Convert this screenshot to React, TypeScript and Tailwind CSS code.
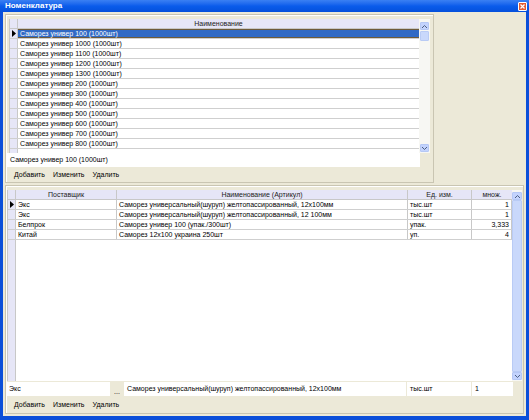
import React from "react";

const upperRows = [
  "Саморез универ 100 (1000шт)",
  "Саморез универ 1000 (1000шт)",
  "Саморез универ 1100 (1000шт)",
  "Саморез универ 1200 (1000шт)",
  "Саморез универ 1300 (1000шт)",
  "Саморез универ 200 (1000шт)",
  "Саморез универ 300 (1000шт)",
  "Саморез универ 400 (1000шт)",
  "Саморез универ 500 (1000шт)",
  "Саморез универ 600 (1000шт)",
  "Саморез универ 700 (1000шт)",
  "Саморез универ 800 (1000шт)",
];

const lowerRows = [
  { supplier: "Экс", name: "Саморез универсальный(шуруп) желтопассированный, 12x100мм", unit: "тыс.шт", mult: "1" },
  { supplier: "Экс", name: "Саморез универсальный(шуруп) желтопассированный, 12 100мм", unit: "тыс.шт", mult: "1" },
  { supplier: "Белпрок", name: "Саморез универ 100 (упак./300шт)", unit: "упак.", mult: "3,333" },
  { supplier: "Китай", name: "Саморез 12x100 украина 250шт", unit: "уп.", mult: "4" },
];

function Marker() {
  return (
    <svg width="4" height="7" viewBox="0 0 4 7">
      <path d="M0 0 L4 3.5 L0 7 Z" fill="#000" />
    </svg>
  );
}

function ArrowBtn({ dir }: { dir: "up" | "down" }) {
  return (
    <div className="h-[8px] w-full rounded-[1px] bg-[#c3d3fd] border border-[#b5c8f5] flex items-center justify-center">
      <svg width="5" height="3" viewBox="0 0 5 3">
        <path d={dir === "up" ? "M0 3 L2.5 0.5 L5 3" : "M0 0 L2.5 2.5 L5 0"} stroke="#4d6185" strokeWidth="1" fill="none" />
      </svg>
    </div>
  );
}

function FlatButton({ label }: { label: string }) {
  return <button className="text-[7px] text-black leading-none">{label}</button>;
}

export default function App() {
  return (
    <div className="w-[529px] h-[420px] flex flex-col bg-[#0b4fd9] font-['Liberation_Sans',Arial,sans-serif] overflow-hidden">
      {/* Title bar */}
      <div className="h-[12px] flex items-center justify-between pl-[5px] pr-[2px] bg-gradient-to-b from-[#3a80f3] via-[#0a5ceb] to-[#0550dc]">
        <span className="text-white text-[8px] font-bold leading-none">Номенклатура</span>
        <div className="w-[9px] h-[9px] bg-[#e35a31] border border-white rounded-[1px] flex items-center justify-center">
          <svg width="5" height="5" viewBox="0 0 5 5">
            <path d="M0.5 0.5 L4.5 4.5 M4.5 0.5 L0.5 4.5" stroke="#fff" strokeWidth="1.2" />
          </svg>
        </div>
      </div>

      {/* Body */}
      <div className="flex-1 mx-[3px] mb-[4px] bg-[#ece9d8] flex flex-col text-[7px] text-black">
        {/* Upper panel */}
        <div className="ml-[2px] mt-[2px] w-[429px] h-[169px] border border-[#c9c5b2] shadow-[inset_1px_1px_0_#fff] flex flex-col">
          <div className="ml-[3px] mt-[4px] w-[421px] h-[134px] flex bg-white border-l border-[#c8c8c8]">
            <div className="flex-1 flex flex-col">
              <div className="h-[10px] flex bg-[#e6e6f7] border-b border-[#c8c8c8]">
                <div className="w-[8px] border-r border-[#c8c8c8]" />
                <div className="flex-1 text-center leading-[9px] text-[#222]">Наименование</div>
              </div>
              {upperRows.map((r, i) => (
                <div key={r} className="h-[10px] flex border-b border-[#cfcfcf]">
                  <div className="w-[8px] bg-[#e6e6f7] border-r border-[#c8c8c8] flex items-center justify-center">
                    {i === 0 && <Marker />}
                  </div>
                  <div
                    className={
                      i === 0
                        ? "flex-1 pl-[2px] leading-[8px] bg-[#316ac5] text-white border-y border-[#6e5b3a]"
                        : "flex-1 pl-[2px] leading-[9px]"
                    }
                  >
                    {r}
                  </div>
                </div>
              ))}
              <div className="flex-1 flex">
                <div className="w-[8px] bg-[#e6e6f7] border-r border-[#c8c8c8]" />
                <div className="flex-1" />
              </div>
            </div>
            <div className="w-[11px] pt-[3px] pb-[1px] px-[1px] bg-[#f7f7f3] flex flex-col">
              <ArrowBtn dir="up" />
              <div className="h-[10px] mt-[1px] rounded-[1px] bg-[#c9d8fb] border border-[#b9cbf5]" />
              <div className="flex-1" />
              <ArrowBtn dir="down" />
            </div>
          </div>
          <div className="ml-[1px] w-[413px] h-[14px] bg-white flex items-center pl-[3px]">
            Саморез универ 100 (1000шт)
          </div>
          <div className="flex-1 flex items-center gap-[8px] pl-[8px]">
            <FlatButton label="Добавить" />
            <FlatButton label="Изменить" />
            <FlatButton label="Удалить" />
          </div>
        </div>

        {/* Lower panel */}
        <div className="mx-[2px] mt-[2px] mb-[2px] flex-1 border border-[#c9c5b2] shadow-[inset_1px_1px_0_#fff] flex flex-col">
          <div className="ml-[1px] mt-[4px] w-[515px] h-[191px] flex bg-white border-l border-[#c8c8c8]">
            <div className="flex-1 flex flex-col">
              <div className="h-[10px] flex bg-[#e6e6f7] border-b border-[#c8c8c8] text-[#222] leading-[9px]">
                <div className="w-[8px] border-r border-[#c8c8c8]" />
                <div className="w-[101px] text-center border-r border-[#c8c8c8]">Поставщик</div>
                <div className="w-[291px] text-center border-r border-[#c8c8c8]">Наименование (Артикул)</div>
                <div className="w-[64px] text-center border-r border-[#c8c8c8]">Ед. изм.</div>
                <div className="flex-1 text-center">множ.</div>
              </div>
              {lowerRows.map((r, i) => (
                <div key={i} className="h-[10px] flex border-b border-[#cfcfcf] leading-[9px]">
                  <div className="w-[8px] bg-[#e6e6f7] border-r border-[#c8c8c8] flex items-center justify-center">
                    {i === 0 && <Marker />}
                  </div>
                  <div className="w-[101px] pl-[2px] border-r border-[#c8c8c8] whitespace-nowrap overflow-hidden">{r.supplier}</div>
                  <div className="w-[291px] pl-[2px] border-r border-[#c8c8c8] whitespace-nowrap overflow-hidden">{r.name}</div>
                  <div className="w-[64px] pl-[2px] border-r border-[#c8c8c8]">{r.unit}</div>
                  <div className="flex-1 pr-[2px] text-right border-r border-[#c8c8c8]">{r.mult}</div>
                </div>
              ))}
              <div className="flex-1 flex">
                <div className="w-[8px] bg-[#e6e6f7] border-r border-[#c8c8c8]" />
                <div className="flex-1" />
              </div>
            </div>
            <div className="w-[10px] pt-[2px] pb-[1px] flex flex-col bg-[#f7f7f3]">
              <ArrowBtn dir="up" />
              <div className="flex-1 rounded-[1px] bg-[#c9d8fb] border border-[#b9cbf5]" />
              <ArrowBtn dir="down" />
            </div>
          </div>
          <div className="ml-[1px] mt-[1px] h-[14px] flex items-stretch">
            <div className="w-[103px] bg-white flex items-center pl-[2px]">Экс</div>
            <div className="w-[14px] flex items-end justify-center pb-[1px] leading-none">...</div>
            <div className="w-[282px] bg-white flex items-center pl-[3px] whitespace-nowrap overflow-hidden">
              Саморез универсальный(шуруп) желтопассированный, 12x100мм
            </div>
            <div className="ml-[1px] w-[64px] bg-white flex items-center pl-[3px]">тыс.шт</div>
            <div className="ml-[1px] w-[41px] bg-white flex items-center pl-[3px]">1</div>
          </div>
          <div className="flex-1 flex items-center gap-[8px] pl-[8px]">
            <FlatButton label="Добавить" />
            <FlatButton label="Изменить" />
            <FlatButton label="Удалить" />
          </div>
        </div>
      </div>
    </div>
  );
}
